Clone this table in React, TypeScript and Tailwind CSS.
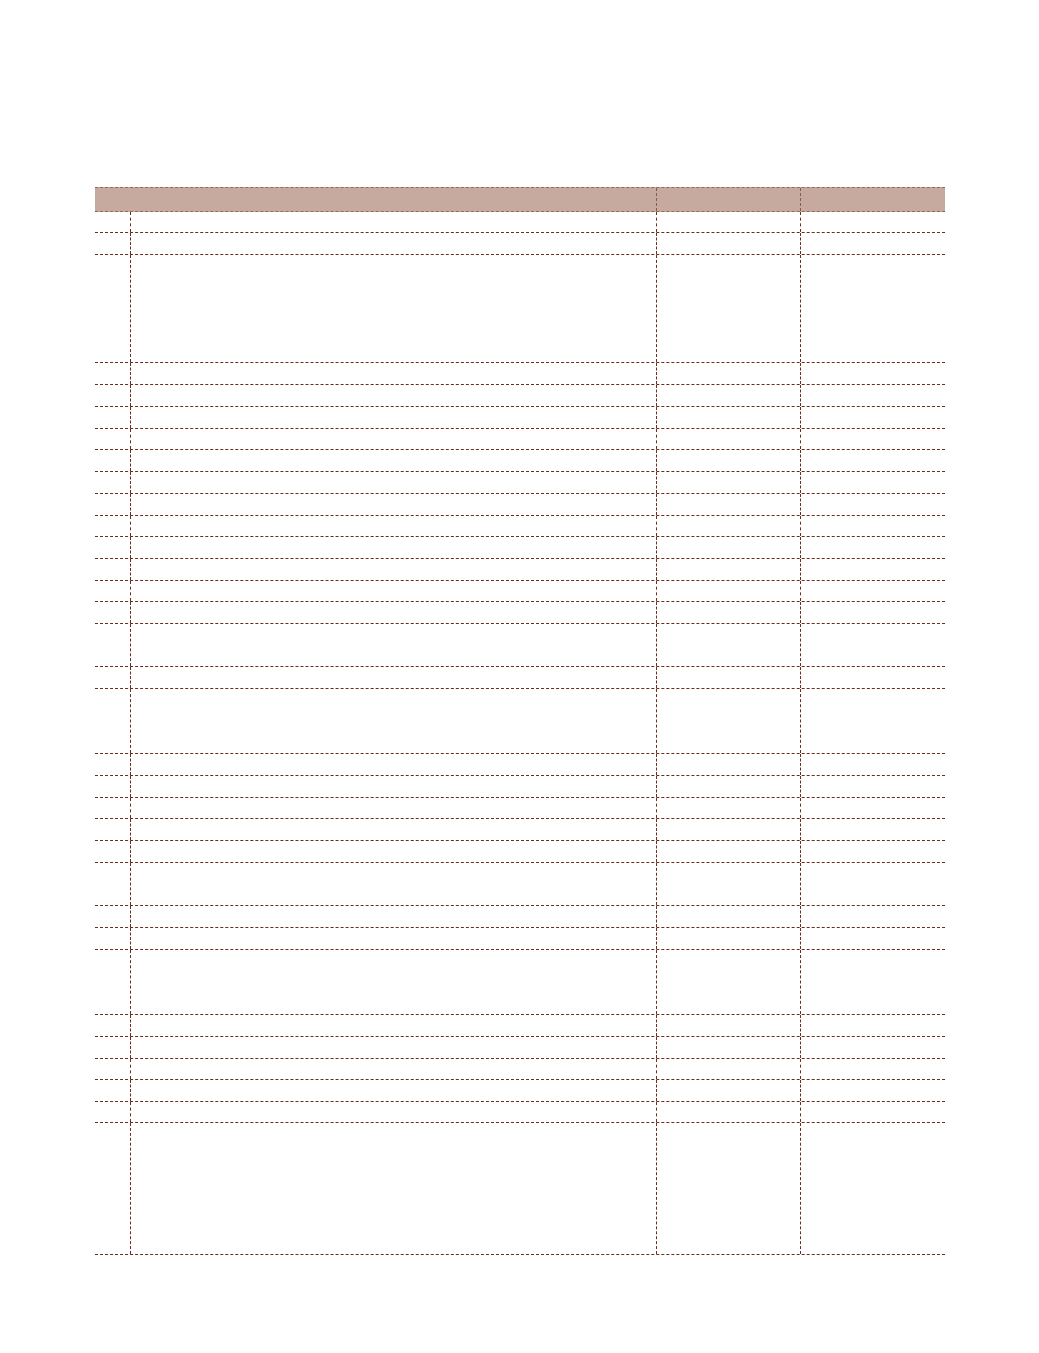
const rows = [21, 22, 108, 22, 22, 22, 21, 22, 22, 22, 21, 22, 22, 21, 22, 43, 22, 65, 22, 22, 21, 22, 22, 43, 22, 22, 65, 22, 22, 21, 22, 21, 132];

const heightClass: Record<number, string> = {
  21: "h-[21px]",
  22: "h-[22px]",
  43: "h-[43px]",
  65: "h-[65px]",
  108: "h-[108px]",
  132: "h-[132px]",
};

const App = () => {
  return (
    <div className="min-h-[1353px] w-[1039px] bg-white pt-[187px] pl-[95px] font-['Liberation_Sans',sans-serif]">
      <div className="w-[850px]">
        {/* header */}
        <div className="grid h-[25px] grid-cols-[35px_526px_144px_145px] border-t border-b border-dashed border-[#9a6656] bg-[#c6aa9f]">
          <div />
          <div />
          <div className="border-l border-dashed border-[#8a5a4a]" />
          <div className="border-l border-dashed border-[#8a5a4a]" />
        </div>

        {/* body */}
        {rows.map((h, i) => (
          <div
            key={i}
            className={`grid grid-cols-[35px_526px_144px_145px] border-b border-dashed border-[#6c2c1e] ${heightClass[h]}`}
          >
            <div />
            <div className="border-l border-dashed border-[#6c2c1e]" />
            <div className="border-l border-dashed border-[#6c2c1e]" />
            <div className="border-l border-dashed border-[#6c2c1e]" />
          </div>
        ))}
      </div>
    </div>
  );
};

export default App;
